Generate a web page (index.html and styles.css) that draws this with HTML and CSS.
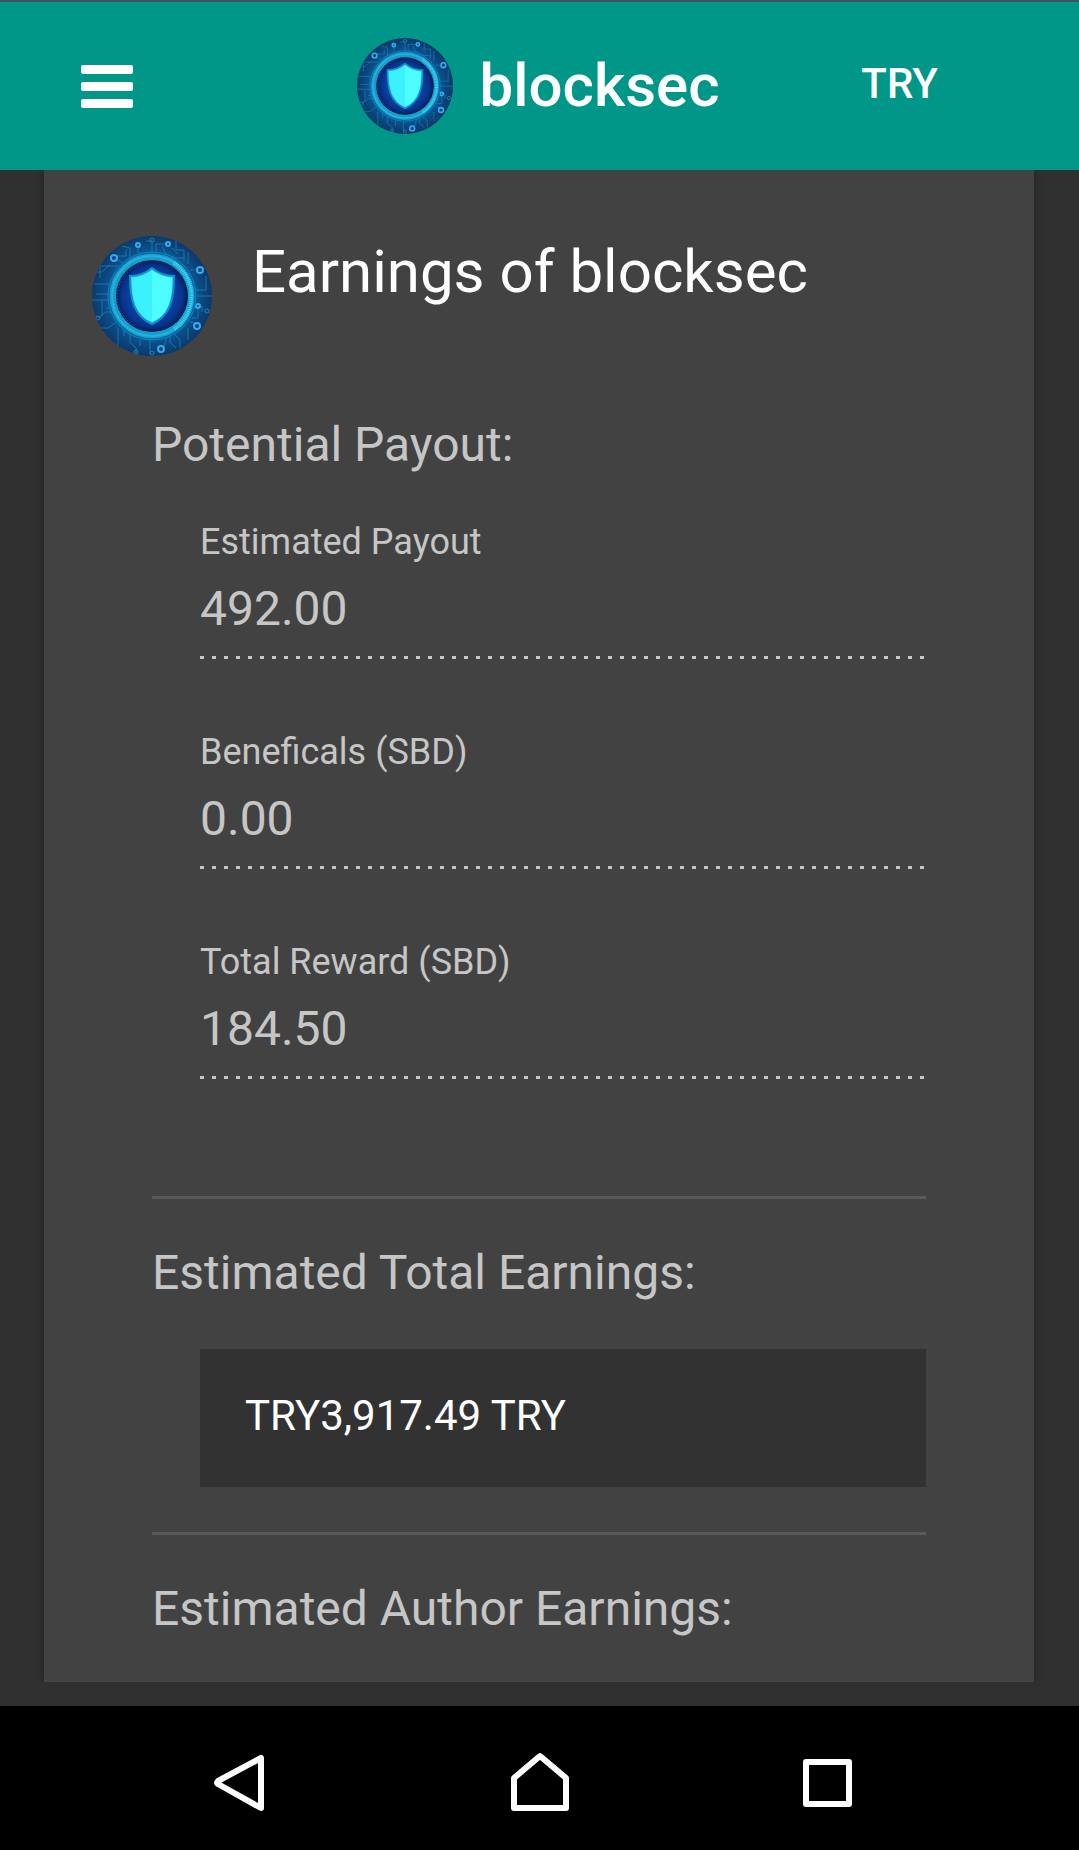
FILE: index.html
```html
<!DOCTYPE html>
<html lang="en">
<head>
    <meta charset="UTF-8">
    <meta name="viewport" content="width=device-width, initial-scale=1.0">
    <title>Earnings of blocksec</title>
    <link rel="stylesheet" href="styles.css">
</head>
<body>
    <!-- Avatar artwork, used in the toolbar and in the card -->
    <svg class="defs" width="0" height="0" aria-hidden="true">
        <defs>
            <radialGradient id="board">
                <stop offset="0.6" stop-color="#0b6fae"/>
                <stop offset="0.8" stop-color="#0b4d86"/>
                <stop offset="1" stop-color="#0c3a6b"/>
            </radialGradient>
            <radialGradient id="disc">
                <stop offset="0.5" stop-color="#0a4aa8"/>
                <stop offset="0.85" stop-color="#08328a"/>
                <stop offset="1" stop-color="#061c50"/>
            </radialGradient>
            <clipPath id="round"><circle cx="60" cy="60" r="60"/></clipPath>
        </defs>
        <symbol id="avatar" viewBox="0 0 120 120">
            <g clip-path="url(#round)">
                <rect width="120" height="120" fill="url(#board)"/>
                <g fill="none" stroke="#2c8fc4" stroke-width="1" opacity="0.6">
                    <path d="M0 36H10L16 30H26M2 48H20M4 58H16M8 42V30H18M0 64H18M10 64V80M14 72H20V66M6 82L14 76H24M8 92H16L24 86M26 92V112M32 90V100"/>
                    <path d="M24 20H34V14M26 24L34 30M46 11V16L50 20M30 10L38 12V22M54 5H60V18M64 18V8H74M70 10L74 18L84 22H92M84 2V14H92V26M96 16V28M80 12L86 18"/>
                    <path d="M98 34H106M104 60H120M104 54H114V40M106 72V82H100M110 76V70M98 86L106 88M96 92V104M38 98V106L44 112V120M48 104V110M58 104V118M72 110L74 104V98M82 98L88 104V112M78 100V106L84 112"/>
                </g>
                <g fill="none" stroke="#37aaf0" stroke-width="2">
                    <circle cx="22" cy="22" r="3"/>
                    <circle cx="46" cy="9" r="2"/>
                    <circle cx="76" cy="8" r="2"/>
                    <circle cx="108" cy="34" r="3"/>
                    <circle cx="106" cy="70" r="2"/>
                    <circle cx="105" cy="90" r="3"/>
                    <circle cx="69" cy="113" r="3"/>
                </g>
                <g fill="none" stroke="#2682b8" stroke-width="1">
                    <circle cx="60" cy="4" r="2"/>
                    <circle cx="115" cy="75" r="2"/>
                    <circle cx="44" cy="116" r="2"/>
                    <circle cx="60" cy="117" r="2"/>
                    <circle cx="6" cy="82" r="2"/>
                </g>
                <circle cx="60" cy="60" r="44" fill="#0a5d9c" stroke="#1583bd" stroke-width="1"/>
                <circle cx="60" cy="60" r="39" fill="none" stroke="#139dcd" stroke-width="7"/>
                <circle cx="60" cy="60" r="40" fill="none" stroke="#25b2d8" stroke-width="2"/>
                <path d="M82 27A40 40 0 0 1 82 93" fill="none" stroke="#42d5f2" stroke-width="4" stroke-dasharray="1 1"/>
                <circle cx="60" cy="60" r="36" fill="url(#disc)"/>
                <path d="M46 29A34 34 0 0 0 43 90" fill="none" stroke="#2c6fe0" stroke-width="1" stroke-dasharray="1 2"/>
                <path d="M60 32C54 37 46 40 38 40C38 64 42 80 60 88C78 80 82 64 82 40C74 40 66 37 60 32Z" fill="#2bdcf6" stroke="#168cd0" stroke-width="2"/>
                <path d="M60 34C66 39 73 41 80 42C80 63 77 79 60 86Z" fill="#4dfdff"/>
                <path d="M60 34C54 39 47 41 40 42C40 63 43 79 60 86Z" fill="#3bf1fd"/>
            </g>
        </symbol>
    </svg>

    <header class="toolbar">
        <button class="menu-button" type="button" aria-label="Menu">
            <span class="menu-bar"></span>
            <span class="menu-bar"></span>
            <span class="menu-bar"></span>
        </button>
        <a class="brand" href="#">
            <svg class="brand-avatar" aria-hidden="true"><use href="#avatar"/></svg>
            <span>blocksec</span>
        </a>
        <button class="currency-button" type="button">TRY</button>
    </header>

    <main class="content">
        <div class="card">
            <div class="card-header">
                <svg class="card-avatar" aria-hidden="true"><use href="#avatar"/></svg>
                <h1 class="card-title">Earnings of blocksec</h1>
            </div>

            <section class="section">
                <h2 class="section-title">Potential Payout:</h2>
                <div class="fields">
                    <div class="field">
                        <label for="payout">Estimated Payout</label>
                        <input id="payout" type="text" value="492.00" disabled>
                    </div>
                    <div class="field">
                        <label for="beneficals">Beneficals (SBD)</label>
                        <input id="beneficals" type="text" value="0.00" disabled>
                    </div>
                    <div class="field">
                        <label for="reward">Total Reward (SBD)</label>
                        <input id="reward" type="text" value="184.50" disabled>
                    </div>
                </div>
            </section>

            <section class="section">
                <h2 class="section-title">Estimated Total Earnings:</h2>
                <p class="amount">TRY3,917.49 TRY</p>
            </section>

            <section class="section">
                <h2 class="section-title">Estimated Author Earnings:</h2>
            </section>
        </div>
    </main>

    <nav class="system-nav">
        <button type="button" aria-label="Back">
            <svg width="50" height="60" viewBox="0 0 50 60"><path d="M47 6V56L4 32Q2 31 4 29Z"/></svg>
        </button>
        <button type="button" aria-label="Home">
            <svg width="58" height="60" viewBox="0 0 58 60"><path d="M3 56V26L29 4L55 26V56Z"/></svg>
        </button>
        <button type="button" aria-label="Recent apps">
            <svg width="62" height="60" viewBox="0 0 62 60"><rect x="3" y="10" width="43" height="42"/></svg>
        </button>
    </nav>
</body>
</html>
```
FILE: styles.css
```css
* {
    box-sizing: border-box;
}

body {
    margin: 0;
    min-height: 100vh;
    display: flex;
    flex-direction: column;
    background: #303030;
    color: #fff;
    font-family: Roboto, "Liberation Sans", sans-serif;
}

button {
    border: 0;
    padding: 0;
    background: none;
    color: inherit;
    font-family: inherit;
    cursor: pointer;
}

svg {
    display: block;
}

.defs {
    position: absolute;
}

/* Toolbar */
.toolbar {
    display: grid;
    grid-template-columns: 1fr auto 1fr;
    align-items: center;
    height: 170px;
    padding: 0 84px 0 81px;
    background: #009688;
    border-top: 2px solid #37595f;
}

.menu-button {
    display: flex;
    flex-direction: column;
    gap: 8px;
    width: 52px;
}

.menu-bar {
    height: 9px;
    border-radius: 2px;
    background: #fff;
}

.brand {
    display: flex;
    align-items: center;
    gap: 27px;
    color: #fff;
    font-size: 60px;
    font-weight: 500;
    line-height: 72px;
    text-decoration: none;
}

.brand-avatar {
    width: 96px;
    height: 96px;
}

.currency-button {
    justify-self: end;
    margin-right: 57px;
    padding-bottom: 4px;
    font-size: 42px;
    font-weight: 500;
    line-height: 54px;
}

/* Card */
.content {
    flex: 1;
    display: flex;
    padding: 0 45px 24px 44px;
}

.card {
    flex: 1;
    padding-top: 66px;
    background: #424242;
    box-shadow: 0 0 9px rgba(0, 0, 0, 0.3);
    clip-path: inset(0 -12px 0 -12px);
}

.card-header {
    display: flex;
    gap: 40px;
    padding: 0 48px;
    margin-bottom: 15px;
}

.card-avatar {
    flex: none;
    width: 120px;
    height: 120px;
}

.card-title {
    margin: 0;
    font-size: 60px;
    font-weight: 400;
    line-height: 72px;
}

.section {
    margin: 0 108px;
    padding: 44px 0 45px;
    color: #c6c6c6;
}

.section:last-child {
    padding-bottom: 43px;
}

.section + .section {
    border-top: 3px solid #595959;
}

.section-title {
    margin: 0;
    font-size: 48px;
    font-weight: 400;
    line-height: 60px;
}

/* Disabled inputs with a dotted underline */
.fields {
    display: flex;
    flex-direction: column;
    gap: 69px;
    padding: 43px 0 72px 48px;
}

.field {
    display: flex;
    flex-direction: column;
    gap: 12px;
}

.field label {
    font-size: 36px;
    line-height: 48px;
}

.field input {
    width: 100%;
    height: 81px;
    padding: 0 0 21px;
    border: 0;
    color: #c6c6c6;
    font-family: inherit;
    font-size: 48px;
    line-height: 60px;
    background: linear-gradient(to right, #c6c6c6 4px, transparent 4px) left bottom / 12px 3px repeat-x;
}

.amount {
    margin: 46px 0 0 48px;
    padding: 40px 45px 44px;
    background: #323232;
    color: #fff;
    font-size: 42px;
    line-height: 54px;
}

/* Android navigation bar */
.system-nav {
    display: grid;
    grid-template-columns: 1fr auto 1fr;
    height: 144px;
    padding: 46px 214px 38px;
    background: #000;
}

.system-nav button:first-child {
    justify-self: start;
}

.system-nav button:last-child {
    justify-self: end;
}

.system-nav svg {
    fill: none;
    stroke: #fff;
    stroke-width: 6;
    stroke-linejoin: round;
}
```
